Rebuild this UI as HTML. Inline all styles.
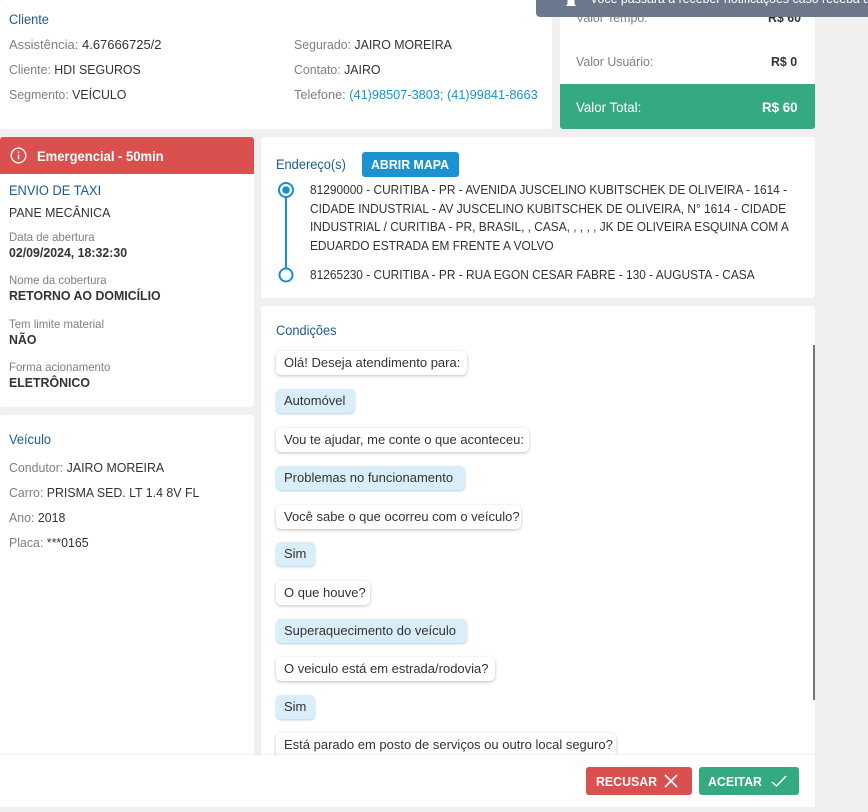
<!DOCTYPE html>
<html><head><meta charset="utf-8"><style>
*{margin:0;padding:0;box-sizing:border-box}
body{width:868px;height:812px;background:#f0f0f0;font-family:"Liberation Sans",sans-serif;font-size:13px;color:#333;position:relative;overflow:hidden}
.c{position:absolute;background:#fff;border-radius:3px}
.t{position:absolute;white-space:nowrap;transform:scaleX(.95);transform-origin:left center;line-height:16px}
.h{color:#1f5c8c;font-size:13.5px}
.g{color:#808080}
.b{font-weight:bold}
.bub{position:absolute;left:276px;height:24px;border-radius:5px;background:#fff;box-shadow:0 1px 3px rgba(0,0,0,.25)}
.bub.u{background:#d9eef8;box-shadow:0 1px 2px rgba(60,130,170,.4)}
.bub span{position:absolute;left:8px;top:4px;white-space:nowrap;transform:scaleX(1);transform-origin:left center;line-height:16px;color:#333}
</style></head><body>

<div class="c" style="left:0;top:0;width:552px;height:129px"></div>
<div class="t h" style="left:9px;top:12px">Cliente</div>
<div class="t" style="left:9px;top:37px;transform:scaleX(1)"><span class="g">Assistência:</span> 4.67666725/2</div>
<div class="t" style="left:9px;top:62px"><span class="g">Cliente:</span> HDI SEGUROS</div>
<div class="t" style="left:9px;top:87px"><span class="g">Segmento:</span> VEÍCULO</div>
<div class="t" style="left:294px;top:37px"><span class="g">Segurado:</span> JAIRO MOREIRA</div>
<div class="t" style="left:294px;top:62px"><span class="g">Contato:</span> JAIRO</div>
<div class="t" style="left:294px;top:87px;transform:scaleX(.98)"><span class="g">Telefone:</span> <span style="color:#1a93cf">(41)98507-3803; (41)99841-8663</span></div>

<div class="c" style="left:560px;top:0;width:255px;height:129px;overflow:hidden">
<div class="t g" style="left:16px;top:10px">Valor Tempo:</div>
<div class="t b" style="left:208px;top:10px">R$ 60</div>
<div class="t g" style="left:16px;top:54px">Valor Usuário:</div>
<div class="t b" style="left:211px;top:54px">R$ 0</div>
<div style="position:absolute;left:0;top:84px;width:255px;height:45px;background:#35a97f"></div>
<div class="t" style="left:16px;top:99px;color:#fff;font-size:14px">Valor Total:</div>
<div class="t b" style="left:202px;top:99px;color:#fff;font-size:14px">R$ 60</div>
</div>
<div style="position:absolute;left:536px;top:0;width:332px;height:17px;background:#6b788c;border-radius:0 0 0 4px;overflow:hidden">
<svg style="position:absolute;left:28px;top:-2px" width="14" height="12" viewBox="0 0 14 12"><path d="M2 8h10l-1.5-2V3a3.5 3.5 0 0 0-7 0v3z" fill="#fff"/></svg>
<div class="t" style="left:54px;top:-9px;color:#fff">Você passará a receber notificações caso receba algum</div>
</div>

<div class="c" style="left:0;top:137px;width:254px;height:270px;overflow:hidden">
<div style="position:absolute;left:0;top:0;width:254px;height:37px;background:#d9504f"></div>
<svg style="position:absolute;left:10px;top:10px" width="17" height="17" viewBox="0 0 17 17"><circle cx="8.5" cy="8.5" r="7.3" fill="none" stroke="#fff" stroke-width="1.4"/><rect x="7.8" y="7.3" width="1.4" height="5" fill="#fff"/><rect x="7.8" y="4.5" width="1.4" height="1.5" fill="#fff"/></svg>
<div class="t b" style="left:37px;top:11px;color:#fff;font-size:14px;transform:scaleX(.93)">Emergencial - 50min</div>
<div class="t h" style="left:9px;top:46px">ENVIO DE TAXI</div>
<div class="t" style="left:9px;top:68px">PANE MECÂNICA</div>
<div class="t g" style="left:9px;top:92px;font-size:12px">Data de abertura</div>
<div class="t b" style="left:9px;top:108px">02/09/2024, 18:32:30</div>
<div class="t g" style="left:9px;top:135px;font-size:12px">Nome da cobertura</div>
<div class="t b" style="left:9px;top:151px">RETORNO AO DOMICÍLIO</div>
<div class="t g" style="left:9px;top:179px;font-size:12px">Tem limite material</div>
<div class="t b" style="left:9px;top:195px">NÃO</div>
<div class="t g" style="left:9px;top:222px;font-size:12px">Forma acionamento</div>
<div class="t b" style="left:9px;top:238px">ELETRÔNICO</div>
</div>

<div class="c" style="left:0;top:415px;width:254px;height:345px"></div>
<div class="t h" style="left:9px;top:432px">Veículo</div>
<div class="t" style="left:9px;top:460px"><span class="g">Condutor:</span> JAIRO MOREIRA</div>
<div class="t" style="left:9px;top:485px"><span class="g">Carro:</span> PRISMA SED. LT 1.4 8V FL</div>
<div class="t" style="left:9px;top:510px"><span class="g">Ano:</span> 2018</div>
<div class="t" style="left:9px;top:535px"><span class="g">Placa:</span> ***0165</div>

<div class="c" style="left:261px;top:137px;width:554px;height:161px"></div>
<div class="t h" style="left:276px;top:157px">Endereço(s)</div>
<div style="position:absolute;left:362px;top:152px;width:97px;height:25px;background:#1a93d0;border-radius:3px"></div>
<div class="t b" style="left:371px;top:157px;color:#fff">ABRIR MAPA</div>
<svg style="position:absolute;left:277px;top:181px" width="20" height="104" viewBox="0 0 20 104"><line x1="9" y1="10" x2="9" y2="88" stroke="#1a8fc9" stroke-width="2"/><circle cx="9" cy="9" r="7" fill="#fff" stroke="#1a8fc9" stroke-width="2"/><circle cx="9" cy="9" r="3.8" fill="#1a8fc9"/><circle cx="9" cy="94" r="6.5" fill="#fff" stroke="#1a8fc9" stroke-width="2"/></svg>
<div class="t" style="left:310px;top:181px;line-height:18.5px;font-size:13px;transform:scaleX(.915)">81290000 - CURITIBA - PR - AVENIDA JUSCELINO KUBITSCHEK DE OLIVEIRA - 1614 -<br>CIDADE INDUSTRIAL - AV JUSCELINO KUBITSCHEK DE OLIVEIRA, N° 1614 - CIDADE<br>INDUSTRIAL / CURITIBA - PR, BRASIL, , CASA, , , , , JK DE OLIVEIRA ESQUINA COM A<br>EDUARDO ESTRADA EM FRENTE A VOLVO</div>
<div class="t" style="left:310px;top:267px;transform:scaleX(.915)">81265230 - CURITIBA - PR - RUA EGON CESAR FABRE - 130 - AUGUSTA - CASA</div>

<div class="c" style="left:261px;top:306px;width:554px;height:460px;overflow:hidden">
<div style="position:absolute;left:552px;top:39px;width:2px;height:355px;background:#777"></div>
</div>
<div class="t h" style="left:276px;top:323px">Condições</div>
<div class="bub" style="top:351px;width:191px"><span>Olá! Deseja atendimento para:</span></div>
<div class="bub u" style="top:389px;width:79px"><span>Automóvel</span></div>
<div class="bub" style="top:428px;width:253px"><span>Vou te ajudar, me conte o que aconteceu:</span></div>
<div class="bub u" style="top:466px;width:189px"><span>Problemas no funcionamento</span></div>
<div class="bub" style="top:505px;width:245px"><span>Você sabe o que ocorreu com o veículo?</span></div>
<div class="bub u" style="top:542px;width:39px"><span>Sim</span></div>
<div class="bub" style="top:581px;width:94px"><span>O que houve?</span></div>
<div class="bub u" style="top:619px;width:191px"><span>Superaquecimento do veículo</span></div>
<div class="bub" style="top:657px;width:219px"><span>O veiculo está em estrada/rodovia?</span></div>
<div class="bub u" style="top:695px;width:39px"><span>Sim</span></div>
<div class="bub" style="top:733px;width:340px"><span>Está parado em posto de serviços ou outro local seguro?</span></div>

<div style="position:absolute;left:0;top:755px;width:815px;height:52px;background:#fff;box-shadow:0 -1px 2px rgba(0,0,0,.06)"></div>
<div style="position:absolute;left:586px;top:767px;width:106px;height:28px;background:#d9504f;border-radius:3px"></div>
<div class="t b" style="left:596px;top:774px;color:#fff">RECUSAR</div>
<svg style="position:absolute;left:664px;top:774px" width="14" height="14" viewBox="0 0 14 14"><path d="M1 1L13 13M13 1L1 13" stroke="#fff" stroke-width="1.6"/></svg>
<div style="position:absolute;left:699px;top:767px;width:100px;height:28px;background:#35a97f;border-radius:3px"></div>
<div class="t b" style="left:708px;top:774px;color:#fff">ACEITAR</div>
<svg style="position:absolute;left:771px;top:774px" width="16" height="14" viewBox="0 0 16 14"><path d="M1 8L5.5 12L15 2" fill="none" stroke="#fff" stroke-width="1.5"/></svg>
</body></html>
